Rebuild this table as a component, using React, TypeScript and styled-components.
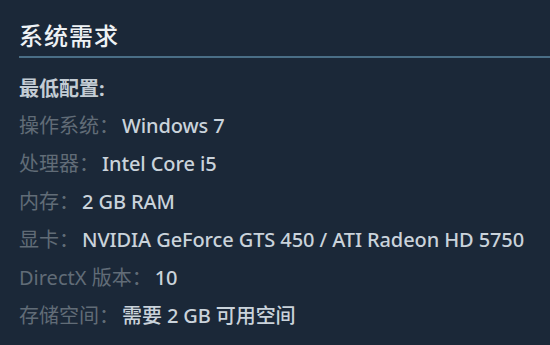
import React from "react";
import styled, { createGlobalStyle } from "styled-components";

const GlobalStyle = createGlobalStyle`
  html, body {
    margin: 0;
    padding: 0;
    background: #1b2838;
  }
  body {
    font-family: "Noto Sans", "Noto Sans CJK SC", sans-serif;
  }
`;

const Panel = styled.div`
  width: 550px;
  height: 345px;
  box-sizing: border-box;
  padding: 18px 0 0 19px;
  background: #1b2838;
  overflow: hidden;
`;

const Title = styled.h2`
  margin: 0;
  padding-bottom: 2px;
  font-size: 24px;
  font-weight: 500;
  letter-spacing: 1px;
  line-height: 36px;
  color: #eef2f5;
  border-bottom: 2px solid #4a6e86;
`;

const Block = styled.div`
  margin-top: 12px;
  display: flex;
  flex-direction: column;
`;

const Heading = styled.div`
  font-size: 20px;
  font-weight: 700;
  line-height: 37px;
  color: #c3ccd4;
`;

const Row = styled.div`
  display: flex;
  align-items: baseline;
  height: 38px;
  line-height: 38px;
  white-space: nowrap;
  font-size: 20px;
`;

const Label = styled.span`
  color: #616c77;
`;

const Value = styled.span`
  margin-left: 3px;
  color: #cad3db;
  font-weight: 500;
  letter-spacing: -0.1px;
`;

const specs = [
  { label: "操作系统：", value: "Windows 7" },
  { label: "处理器：", value: "Intel Core i5" },
  { label: "内存：", value: "2 GB RAM" },
  { label: "显卡：", value: "NVIDIA GeForce GTS 450 / ATI Radeon HD 5750" },
  { label: "DirectX 版本：", value: "10" },
  { label: "存储空间：", value: "需要 2 GB 可用空间" },
];

export default function App() {
  return (
    <Panel>
      <GlobalStyle />
      <Title>系统需求</Title>
      <Block>
        <Heading>最低配置:</Heading>
        {specs.map(s => (
          <Row key={s.label}>
            <Label>{s.label}</Label>
            <Value>{s.value}</Value>
          </Row>
        ))}
      </Block>
    </Panel>
  );
}
